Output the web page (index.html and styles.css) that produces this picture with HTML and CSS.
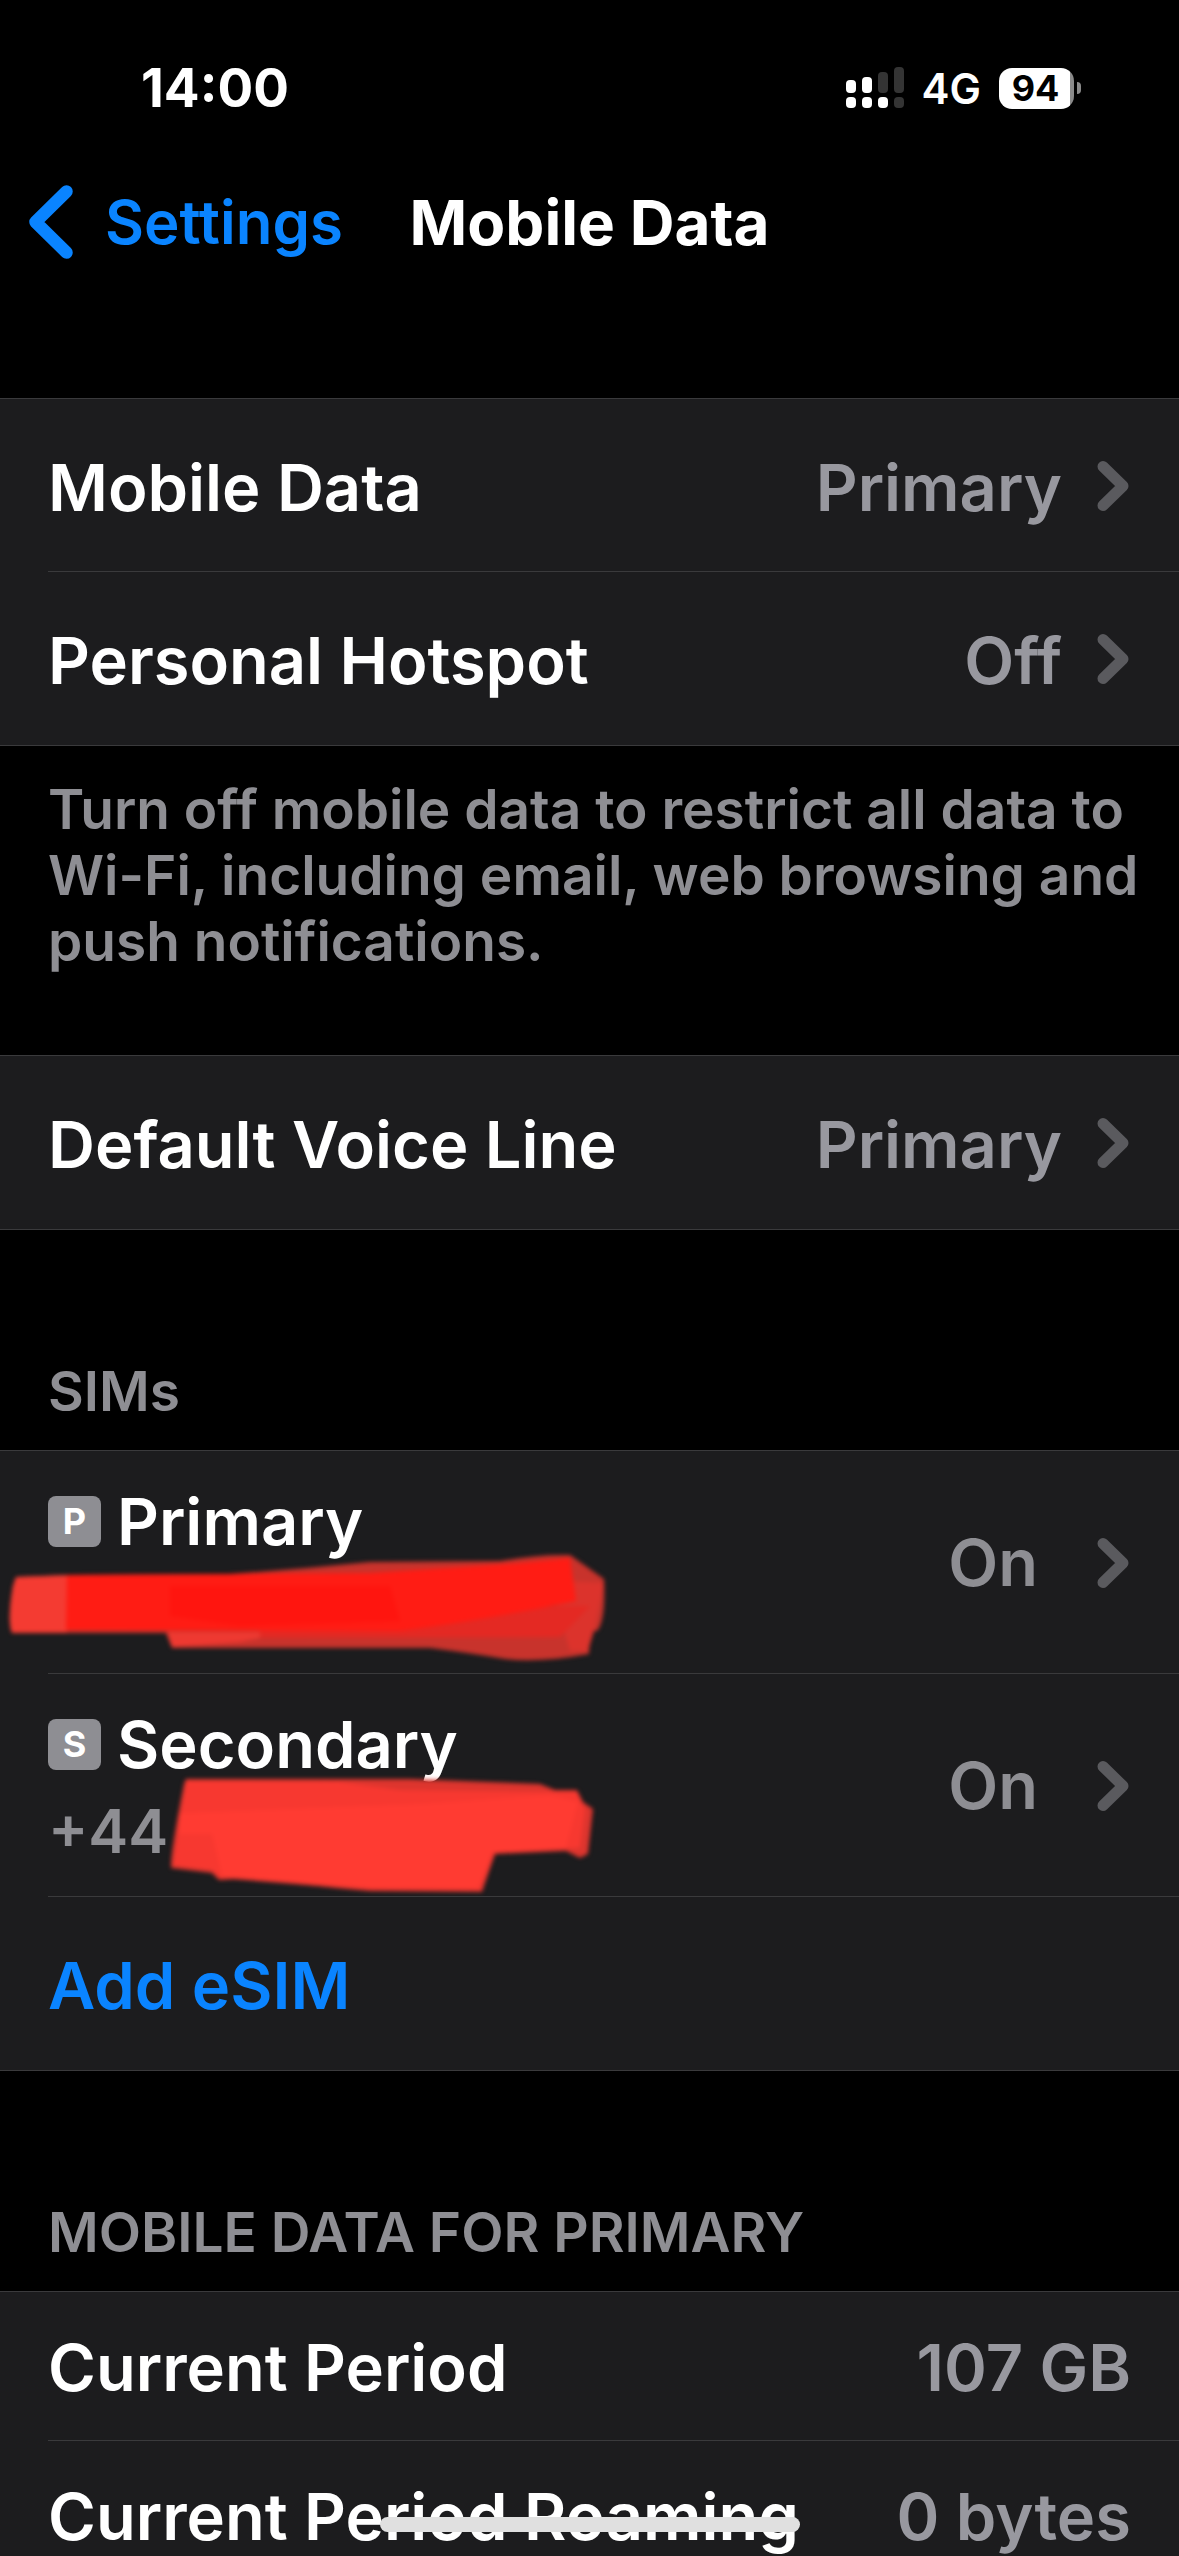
FILE: index.html
```html
<!DOCTYPE html>
<html lang="en">
<head>
<meta charset="utf-8">
<meta name="viewport" content="width=device-width, initial-scale=1">
<title>Mobile Data</title>
<link rel="stylesheet" href="styles.css">
</head>
<body>
<svg class="defs" aria-hidden="true">
  <symbol id="chevron" viewBox="0 0 32 52"><path d="M6 6.500 L26 26 L6 45.500" fill="none" stroke="currentColor" stroke-width="11" stroke-linecap="round" stroke-linejoin="round"/></symbol>
</svg>
<div class="screen">
  <div class="status">
    <span class="time">14:00</span>
    <div class="indicators">
      <svg class="signal" viewBox="0 0 58 42" aria-label="Signal strength">
        <g fill="#fff"><rect x="0" y="13" width="10" height="13" rx="4"/><rect x="16" y="10" width="10" height="16" rx="4"/><rect x="0" y="30" width="10" height="11" rx="4"/><rect x="16" y="30" width="10" height="11" rx="4"/><rect x="32" y="30" width="10" height="11" rx="4"/></g>
        <g fill="#343434"><rect x="32" y="5" width="10" height="21" rx="4"/><rect x="48" y="0" width="10" height="26" rx="4"/><rect x="48" y="30" width="10" height="11" rx="4"/></g>
      </svg>
      <span class="network">4G</span>
      <span class="battery"><span class="level">94</span></span>
    </div>
  </div>
  <header class="nav">
    <a class="back" href="#settings"><svg viewBox="0 0 44 74" aria-hidden="true"><path d="M37.500 6.500 L6.500 37 L37.500 67.500" fill="none" stroke="currentColor" stroke-width="12.500" stroke-linecap="round" stroke-linejoin="round"/></svg>Settings</a>
    <h1 class="title">Mobile Data</h1>
  </header>
  <main>
    <section class="group">
      <a class="row" href="#data"><span class="label">Mobile Data</span><span class="value">Primary</span><svg class="chevron"><use href="#chevron"/></svg></a>
      <a class="row" href="#hotspot"><span class="label">Personal Hotspot</span><span class="value">Off</span><svg class="chevron"><use href="#chevron"/></svg></a>
    </section>
    <p class="note">Turn off mobile data to restrict all data to Wi-Fi, including email, web browsing and push notifications.</p>
    <section class="group">
      <a class="row" href="#voice"><span class="label">Default Voice Line</span><span class="value">Primary</span><svg class="chevron"><use href="#chevron"/></svg></a>
    </section>
    <h2 class="heading">SIMs</h2>
    <section class="group">
      <a class="row sim" href="#primary">
        <span class="label"><span class="name"><span class="badge">P</span>Primary</span><span class="number">&nbsp;</span></span>
        <span class="value state">On</span><svg class="chevron"><use href="#chevron"/></svg>
        <svg class="scribble" viewBox="0 0 640 222" aria-hidden="true">
          <g class="soft">
            <path d="M16 126 L70 124 L230 123 Q300 118 370 111 L500 110 Q540 103 570 104 L604 128 Q606 170 597 180 L590 180 L589 203 Q540 212 505 208 Q470 202 430 197 L172 197 L166 182 L12 182 Q7 170 13 135 Z" fill="#c8332c"/>
            <path d="M16 126 L70 124 L67 182 L12 182 Q7 170 13 135 Z" fill="#f43b32"/>
            <path d="M167 181 L290 181 L240 191 L172 196 Z" fill="#ee3931"/>
            <path d="M565 130 L604 132 L594 180 L588 200 L570 200 L555 150 Z" fill="#dc332c"/>
            <path d="M260 160 L590 155 L560 186 L260 187 Z" fill="#e42923"/>
            <path d="M67 124 L370 122 L520 112 L570 107 L576 150 Q480 170 400 180 L66 179 Z" fill="#ff1c14"/>
            <path d="M170 135 L390 135 L400 170 L240 175 L170 165 Z" fill="#ff150f"/>
          </g>
        </svg>
      </a>
      <a class="row sim" href="#secondary">
        <span class="label"><span class="name"><span class="badge">S</span>Secondary</span><span class="number">+44</span></span>
        <span class="value state">On</span><svg class="chevron"><use href="#chevron"/></svg>
        <svg class="scribble" viewBox="0 0 640 222" aria-hidden="true">
          <g class="soft">
            <path d="M186 105 L410 105 L540 110 L555 116 L577 116 L583 128 L593 135 L588 180 L580 184 L566 177 L495 180 L482 218 L370 217 Q300 211 250 204 L219 206 L212 199 L171 194 Q170 180 184 110 Z" fill="#dd352e"/>
            <path d="M186 107 L340 108 L400 116 L577 118 L585 135 L580 174 L495 179 L480 216 L370 216 L220 204 L212 196 L173 192 Z" fill="#f73830"/>
            <path d="M180 139 L420 130 L550 121 L578 128 L566 174 L492 178 L478 214 L370 213 L222 202 L212 160 L178 160 Z" fill="#ff3b32"/>
          </g>
        </svg>
      </a>
      <a class="row action" href="#esim"><span class="label">Add eSIM</span></a>
    </section>
    <h2 class="heading">MOBILE DATA FOR PRIMARY</h2>
    <section class="group">
      <div class="row compact"><span class="label">Current Period</span><span class="value">107 GB</span></div>
      <div class="row compact"><span class="label">Current Period Roaming</span><span class="value">0 bytes</span></div>
    </section>
  </main>
  <div class="home"></div>
</div>
</body>
</html>
```
FILE: styles.css
```css
* { box-sizing: border-box; }
body {
  margin: 0;
  background: #000;
  color: #fff;
  font-family: Inter, "Liberation Sans", sans-serif;
  font-size: 65px;
  font-weight: 600;
}
a { color: inherit; text-decoration: none; }
.defs { position: absolute; width: 0; height: 0; }
.screen { height: 100vh; overflow: hidden; }

.status {
  display: flex;
  align-items: center;
  justify-content: space-between;
  height: 176px;
  padding: 0 98px 0 141px;
}
.time { font-size: 53px; font-weight: 700; }
.indicators { display: flex; align-items: center; gap: 18px; }
.signal { width: 58px; height: 42px; }
.network { font-size: 42px; font-weight: 600; }
.battery { display: flex; align-items: center; gap: 3px; }
.level {
  width: 75px;
  height: 41px;
  border-radius: 13px;
  background: linear-gradient(90deg, #fff 71px, #8a8a8a 71px);
  color: #000;
  font-size: 36px;
  font-weight: 700;
  line-height: 41px;
  text-align: center;
  padding-right: 2px;
}
.battery::after { content: ""; width: 4px; height: 12px; border-radius: 0 4px 4px 0; background: #8a8a8a; }

.nav {
  display: grid;
  grid-template-columns: 1fr auto 1fr;
  align-items: center;
  height: 92px;
  margin-bottom: 130px;
}
.back { display: flex; align-items: center; gap: 32px; padding-left: 29px; color: #0a84ff; font-size: 60px; }
.back svg { width: 44px; height: 74px; }
.title { margin: 0; font-size: 62px; font-weight: 700; }

.group { background: #1c1c1e; border-top: 1px solid #3a3a3c; border-bottom: 1px solid #3a3a3c; }
.row { position: relative; display: flex; align-items: center; height: 173px; padding: 0 48px; }
.row + .row::before { content: ""; position: absolute; top: -1px; left: 48px; right: 0; height: 1px; background: #3a3a3c; }
.label, .value { padding-top: 4px; }
.label { flex: 1; white-space: nowrap; }
.value { color: #98989f; }
.chevron { width: 32px; height: 52px; margin: 0 2px 0 35px; color: #5a5a5e; }
.action { color: #0a84ff; }
.compact { height: 149px; }
.compact .label, .compact .value { padding-top: 2px; }

.note { margin: 30px 32px 81px 48px; color: #8e8e93; font-size: 55px; line-height: 66px; }
.heading { margin: 128px 48px 26px; color: #8e8e93; font-size: 55px; font-weight: 600; line-height: 66px; }

.sim { height: 223px; }
.label .name, .label .number { display: flex; align-items: center; height: 86px; }
.name { gap: 16px; }
.number { color: #8e8e93; font-size: 60px; }
.badge { width: 53px; height: 51px; border-radius: 8px; background: #8e8e93; font-size: 36px; font-weight: 700; line-height: 51px; text-align: center; }
.state { color: #8e8e93; margin-right: 24px; padding-top: 0; }
.scribble { position: absolute; left: 0; top: 0; width: 640px; height: 222px; overflow: visible; }
.soft { filter: blur(2px); }

.home { position: fixed; bottom: 24px; left: 50%; width: 420px; height: 15px; margin-left: -210px; border-radius: 8px; background: #e0e0e0; }
```
